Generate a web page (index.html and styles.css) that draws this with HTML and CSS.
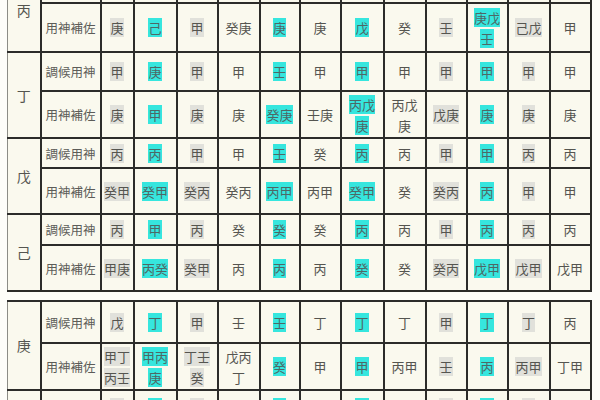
FILE: index.html
```html
<!DOCTYPE html>
<html lang="zh-Hant">
<head>
<meta charset="utf-8">
<title>調候用神表</title>
<link rel="stylesheet" href="styles.css">
</head>
<body>
<div class="sheet">
<table class="grid t1">
<colgroup>
<col class="w33"><col class="w60"><col class="w33"><col class="w43"><col class="w41"><col class="w42"><col class="w40"><col class="w41"><col class="w43"><col class="w42"><col class="w41"><col class="w41"><col class="w42"><col class="w41">
</colgroup>
<tr class="h35">
<td class="stem" rowspan="2">丙</td><td class="label"></td>
<td></td><td></td><td></td><td></td><td></td><td></td><td></td><td></td><td></td><td></td><td></td><td></td>
</tr>
<tr class="h49">
<td class="label">用神補佐</td>
<td><span class="g">庚</span></td><td><span class="c">己</span></td><td><span class="g">甲</span></td><td>癸庚</td><td><span class="c">庚</span></td><td>庚</td><td><span class="c">戊</span></td><td>癸</td><td><span class="g">壬</span></td><td><span class="c">庚戊<br>壬</span></td><td><span class="g">己戊</span></td><td>甲</td>
</tr>
<tr class="h39">
<td class="stem" rowspan="2">丁</td><td class="label">調候用神</td>
<td><span class="g">甲</span></td><td><span class="c">庚</span></td><td><span class="g">甲</span></td><td>甲</td><td><span class="c">壬</span></td><td>甲</td><td><span class="c">甲</span></td><td>甲</td><td><span class="g">甲</span></td><td><span class="c">甲</span></td><td><span class="g">甲</span></td><td>甲</td>
</tr>
<tr class="h47">
<td class="label">用神補佐</td>
<td><span class="g">庚</span></td><td><span class="c">甲</span></td><td><span class="g">庚</span></td><td>庚</td><td><span class="c">癸庚</span></td><td>壬庚</td><td><span class="c">丙戊<br>庚</span></td><td>丙戊<br>庚</td><td><span class="g">戊庚</span></td><td><span class="c">庚</span></td><td><span class="g">庚</span></td><td>庚</td>
</tr>
<tr class="h30">
<td class="stem" rowspan="2">戊</td><td class="label">調候用神</td>
<td><span class="g">丙</span></td><td><span class="c">丙</span></td><td><span class="g">甲</span></td><td>甲</td><td><span class="c">壬</span></td><td>癸</td><td><span class="c">丙</span></td><td>丙</td><td><span class="g">甲</span></td><td><span class="c">甲</span></td><td><span class="g">丙</span></td><td>丙</td>
</tr>
<tr class="h46">
<td class="label">用神補佐</td>
<td><span class="g">癸甲</span></td><td><span class="c">癸甲</span></td><td><span class="g">癸丙</span></td><td>癸丙</td><td><span class="c">丙甲</span></td><td>丙甲</td><td><span class="c">癸甲</span></td><td>癸</td><td><span class="g">癸丙</span></td><td><span class="c">丙</span></td><td><span class="g">甲</span></td><td>甲</td>
</tr>
<tr class="h31">
<td class="stem" rowspan="2">己</td><td class="label">調候用神</td>
<td><span class="g">丙</span></td><td><span class="c">甲</span></td><td><span class="g">丙</span></td><td>癸</td><td><span class="c">癸</span></td><td>癸</td><td><span class="c">丙</span></td><td>丙</td><td><span class="g">甲</span></td><td><span class="c">丙</span></td><td><span class="g">丙</span></td><td>丙</td>
</tr>
<tr class="h46">
<td class="label">用神補佐</td>
<td><span class="g">甲庚</span></td><td><span class="c">丙癸</span></td><td><span class="g">癸甲</span></td><td>丙</td><td><span class="c">丙</span></td><td>丙</td><td><span class="c">癸</span></td><td>癸</td><td><span class="g">癸丙</span></td><td><span class="c">戊甲</span></td><td><span class="g">戊甲</span></td><td>戊甲</td>
</tr>
</table>

<table class="grid t2">
<colgroup>
<col class="w33"><col class="w60"><col class="w33"><col class="w43"><col class="w41"><col class="w42"><col class="w40"><col class="w41"><col class="w43"><col class="w42"><col class="w41"><col class="w41"><col class="w42"><col class="w41">
</colgroup>
<tr class="h42">
<td class="stem" rowspan="2">庚</td><td class="label">調候用神</td>
<td><span class="g">戊</span></td><td><span class="c">丁</span></td><td><span class="g">甲</span></td><td>壬</td><td><span class="c">壬</span></td><td>丁</td><td><span class="c">丁</span></td><td>丁</td><td><span class="g">甲</span></td><td><span class="c">丁</span></td><td><span class="g">丁</span></td><td>丙</td>
</tr>
<tr class="h47">
<td class="label">用神補佐</td>
<td><span class="g">甲丁<br>丙壬</span></td><td><span class="c">甲丙<br>庚</span></td><td><span class="g">丁壬<br>癸</span></td><td>戊丙<br>丁</td><td><span class="c">癸</span></td><td>甲</td><td><span class="c">甲</span></td><td>丙甲</td><td><span class="g">壬</span></td><td><span class="c">丙</span></td><td><span class="g">丙甲</span></td><td>丁甲</td>
</tr>
<tr class="h34">
<td class="stem" rowspan="2">辛</td><td class="label">調候用神</td>
<td><span class="g">己</span></td><td><span class="c">壬</span></td><td><span class="g">壬</span></td><td>壬</td><td><span class="c">壬</span></td><td>壬</td><td><span class="c">壬</span></td><td>壬</td><td><span class="g">壬</span></td><td><span class="c">壬</span></td><td><span class="g">丙</span></td><td>丙</td>
</tr>
<tr class="h46">
<td class="label">用神補佐</td>
<td><span class="g">甲</span></td><td><span class="c">己</span></td><td><span class="g">己</span></td><td>癸</td><td><span class="c">己</span></td><td>庚</td><td><span class="c">甲</span></td><td>甲</td><td><span class="g">甲</span></td><td><span class="c">丙</span></td><td><span class="g">丙</span></td><td>丙</td>
</tr>
</table>
</div>
</body>
</html>
```

FILE: styles.css
```css
html, body {
  margin: 0;
  padding: 0;
  background: #fdfdf9;
  overflow: hidden;
}

body {
  font-family: "Noto Sans CJK TC", "Noto Sans CJK SC", "DejaVu Sans", sans-serif;
  color: #555550;
}

.sheet {
  padding-left: 7px;
}

.grid {
  border-collapse: collapse;
  table-layout: fixed;
  width: 583px;
  background: #faf9ee;
}

.t1 {
  margin-top: -33px;
}

.t2 {
  margin-top: 8px;
}

.w33 { width: 33px; }
.w60 { width: 60px; }
.w40 { width: 40px; }
.w41 { width: 41px; }
.w42 { width: 42px; }
.w43 { width: 43px; }

.h30 { height: 30px; }
.h31 { height: 31px; }
.h34 { height: 34px; }
.h35 { height: 35px; }
.h39 { height: 39px; }
.h42 { height: 42px; }
.h46 { height: 46px; }
.h47 { height: 47px; }
.h49 { height: 49px; }

.grid td {
  border: 2px solid #2c2c2a;
  padding: 0;
  text-align: center;
  vertical-align: middle;
  font-size: 13px;
  line-height: 21px;
  white-space: nowrap;
}

.grid td.stem {
  font-size: 14px;
  border-left: 1px solid #8c8c86;
}

.grid td.label {
  font-size: 12.5px;
  color: #5c5c58;
}

.g {
  background: #e1e1db;
}

.c {
  background: #36e6de;
  color: #4d6866;
}
```
